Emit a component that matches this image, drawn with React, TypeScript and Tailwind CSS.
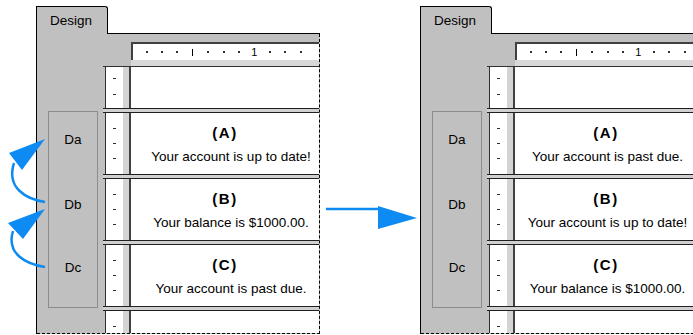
type Row = { title: string; text: string }

const leftRows: Row[] = [
  { title: '(A)', text: 'Your account is up to date!' },
  { title: '(B)', text: 'Your balance is $1000.00.' },
  { title: '(C)', text: 'Your account is past due.' },
]

const rightRows: Row[] = [
  { title: '(A)', text: 'Your account is past due.' },
  { title: '(B)', text: 'Your account is up to date!' },
  { title: '(C)', text: 'Your balance is $1000.00.' },
]

// ruler marks: dots, a half-inch bar and the "1"
const rulerMarks = ['.', '.', '.', '|', '.', '.', '.', '1', '.', '.', '.']

function Dot() {
  return <span className="block h-[1px] w-[3px] bg-[#303030]" />
}

function Strip({ count, pad }: { count: number; pad: string }) {
  return (
    <div className="ml-[2px] flex w-[26px] shrink-0 border-l border-[#303030] bg-white">
      <div className={`flex w-[17px] flex-col items-center ${pad}`}>
        {Array.from({ length: count }).map((_, i) => (
          <Dot key={i} />
        ))}
      </div>
      <div className="w-[6px] bg-[#d4d4d4]" />
      <div className="w-[2px] bg-[#404040]" />
    </div>
  )
}

function Separator() {
  return <div className="h-[5px] shrink-0 border-y border-[#202020] bg-[#d0d0d0]" />
}

function Panel({ rows, titlePad, textPad }: { rows: Row[]; titlePad: string; textPad: string }) {
  return (
    <div className="flex w-[284px] shrink-0 flex-col pt-[6px]">
      {/* tab header */}
      <div className="flex h-[28px]">
        <div className="w-[72px] rounded-tr-[3px] border-t border-l border-r border-black bg-[#c0c0c0] pl-[13px] pt-[6px] text-[13.5px] leading-[15px] text-black">
          Design
        </div>
        <div className="h-[1px] flex-1 self-end bg-black" />
      </div>

      <div className="border-l border-black">
        <div className="border-r border-b border-dashed border-black bg-[#c0c0c0]">
          <div className="h-[8px]" />

          {/* horizontal ruler */}
          <div className="flex h-[24px]">
            <div className="w-[94px]" />
            <div className="flex flex-1 flex-col">
              <div className="flex h-[18px] items-center border-t-2 border-l-2 border-[#404040] bg-white pl-[6px]">
                {rulerMarks.map((m, i) => (
                  <div key={i} className="flex w-[15.4px] shrink-0 justify-center">
                    {m === '.' && <span className="block h-[2px] w-[2px] bg-[#303030]" />}
                    {m === '|' && <span className="block h-[7px] w-[1px] bg-black" />}
                    {m === '1' && <span className="text-[11px] leading-none text-black">1</span>}
                  </div>
                ))}
              </div>
              <div className="h-[6px] bg-[#d8d8d8]" />
            </div>
          </div>

          <div className="flex">
            {/* group labels */}
            <div className="w-[66px] shrink-0">
              <div className="ml-[11px] mt-[45px] flex h-[197px] w-[50px] flex-col items-center border border-[#8c8c8c] pt-[20px] text-[13.5px] leading-[15px] text-black">
                <span>Da</span>
                <span className="mt-[50px]">Db</span>
                <span className="mt-[48px]">Dc</span>
              </div>
            </div>

            {/* sections */}
            <div className="flex flex-1 flex-col">
              <div className="flex h-[42px] border-t border-[#303030]">
                <Strip count={2} pad="pt-[11px] gap-[15px]" />
                <div className="flex-1 bg-white" />
              </div>
              {rows.map((r) => (
                <div key={r.title} className="flex flex-col">
                  <Separator />
                  <div className="flex h-[61px]">
                    <Strip count={3} pad="pt-[15px] gap-[14px]" />
                    <div className="flex flex-1 flex-col items-center bg-white pt-[11px] text-black">
                      <span className={`h-[18px] text-[15px] font-bold leading-[18px] tracking-[1.5px] ${titlePad}`}>{r.title}</span>
                      <span className={`mt-[7px] whitespace-nowrap text-[13.5px] leading-[16px] ${textPad}`}>{r.text}</span>
                    </div>
                  </div>
                </div>
              ))}
              <Separator />
              <div className="flex h-[22px]">
                <Strip count={1} pad="pt-[15px]" />
                <div className="flex-1 bg-white" />
              </div>
            </div>
          </div>
        </div>
      </div>
    </div>
  )
}

export default function App() {
  return (
    <div className="relative h-[335px] w-[693px] overflow-hidden bg-white font-['Liberation_Sans',Arial,sans-serif]">
      <div className="flex pl-[36px]">
        <Panel rows={leftRows} titlePad="" textPad="pl-[12px]" />
        <div className="ml-[100px]">
          <Panel rows={rightRows} titlePad="pr-[6px]" textPad="pr-[3px]" />
        </div>
      </div>

      <svg className="pointer-events-none absolute left-0 top-0" width="693" height="335" viewBox="0 0 693 335">
        {/* Db -> Da */}
        <path d="M45,202 C26,199 6,188 14,163" fill="none" stroke="#0d8bf2" strokeWidth="2.5" />
        <polygon points="45,139 9,153 22,170" fill="#0d8bf2" />
        {/* Dc -> Db */}
        <path d="M45,267 C26,264 6,254 13,231" fill="none" stroke="#0d8bf2" strokeWidth="2.5" />
        <polygon points="45,209 8,223 23,239" fill="#0d8bf2" />
        {/* left -> right */}
        <line x1="326" y1="209" x2="381" y2="209" stroke="#0d8bf2" strokeWidth="2.5" />
        <polygon points="378,206 417,218 378,229" fill="#0d8bf2" />
      </svg>
    </div>
  )
}
